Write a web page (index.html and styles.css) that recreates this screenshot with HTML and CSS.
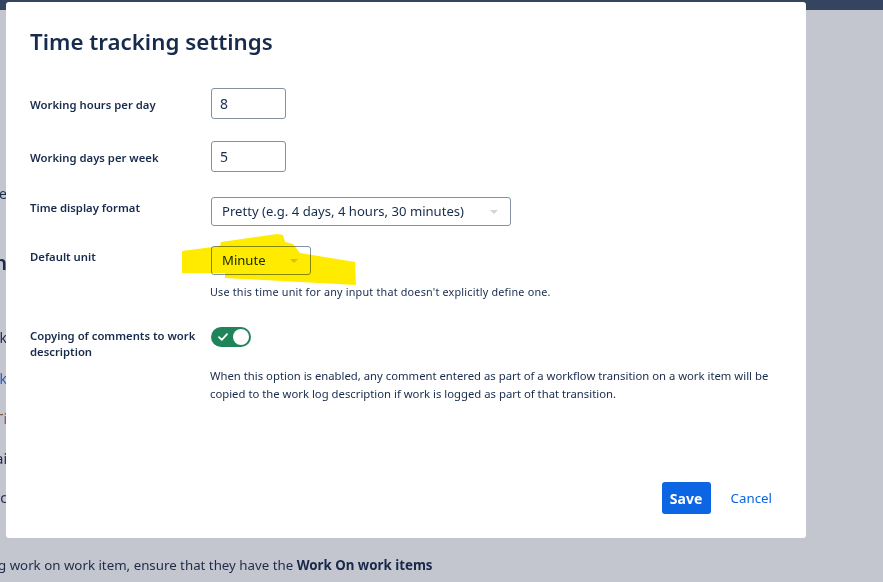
FILE: index.html
```html
<!DOCTYPE html>
<html lang="en">
<head>
<meta charset="utf-8">
<title>Time tracking settings</title>
<link rel="stylesheet" href="styles.css">
</head>
<body>
<div class="topbar"></div>
<main class="page">
  <div class="peek p1"><span>to how time tracking works on your site</span></div>
  <div class="peek p2 heading"><span>Configuration</span></div>
  <div class="peek p3"><span>Working hours per day and week</span></div>
  <div class="peek p4 link"><span>Log work</span></div>
  <div class="peek p5 warn"><span>Ti</span></div>
  <div class="peek p6"><span>Default unit for time entries remai</span></div>
  <div class="peek p7"><span>Copying of comments etc</span></div>
  <p class="bottom-line">g work on work item, ensure that they have the <b>Work On work items</b></p>
</main>

<section class="modal">
  <h1 class="title">Time tracking settings</h1>
  <div class="form">
    <div class="row row-center r1">
      <label class="label">Working hours per day</label>
      <div class="control"><div class="input small">8</div></div>
    </div>
    <div class="row row-center r2">
      <label class="label">Working days per week</label>
      <div class="control"><div class="input small">5</div></div>
    </div>
    <div class="row r3">
      <label class="label pad4">Time display format</label>
      <div class="control"><div class="select wide"><span>Pretty (e.g. 4 days, 4 hours, 30 minutes)</span><i class="caret"></i></div></div>
    </div>
    <div class="row r4">
      <label class="label pad4">Default unit</label>
      <div class="control">
        <div class="select unit"><span>Minute</span><i class="caret"></i></div>
        <p class="help help1">Use this time unit for any input that doesn't explicitly define one.</p>
      </div>
    </div>
    <div class="row r5">
      <label class="label pad1 wrap">Copying of comments to work description</label>
      <div class="control">
        <div class="toggle">
          <svg class="check" width="10" height="8" viewBox="0 0 10 8"><path d="M1 4.2 L3.8 6.8 L9 1.2" fill="none" stroke="#fff" stroke-width="1.8" stroke-linecap="round" stroke-linejoin="round"/></svg>
          <span class="knob"></span>
        </div>
        <p class="help help2">When this option is enabled, any comment entered as part of a workflow transition on a work item will be copied to the work log description if work is logged as part of that transition.</p>
      </div>
    </div>
  </div>
  <div class="footer">
    <button class="btn save">Save</button>
    <button class="btn cancel">Cancel</button>
  </div>
</section>

<svg class="highlight" width="883" height="582" viewBox="0 0 883 582">
  <polygon points="182,251 220,246 221,242 277,234 283,235 285,242 293,244 300,253 355,262 356,285 225,278 225,273 182,273" fill="#ffeb00"/>
</svg>
</body>
</html>
```

FILE: styles.css
```css
* { box-sizing: border-box; }
html, body { margin: 0; padding: 0; }
body {
  width: 883px;
  height: 582px;
  overflow: hidden;
  background: #c3c6cf;
  font-family: "Noto Sans", "Open Sans", sans-serif;
  color: #1d2b48;
  position: relative;
}
.topbar {
  height: 10px;
  background: #35455f;
}
.page {
  padding-top: 175px;
}
.peek {
  width: 7px;
  display: flex;
  justify-content: flex-end;
  white-space: nowrap;
  font-size: 14px;
  line-height: 18px;
}
.p2 { margin-top: 47px; }
.heading { font-size: 20px; line-height: 26px; font-weight: 600; }
.p3 { margin-top: 53px; }
.p4 { margin-top: 23px; }
.link { color: #2a5cb8; }
.p5 { margin-top: 22px; }
.warn { color: #8a5a44; }
.p6 { margin-top: 22px; }
.p7 { margin-top: 21px; }
.bottom-line {
  margin: 49px 0 0 -2px;
  font-size: 13.3px;
  line-height: 18px;
  white-space: nowrap;
  color: #1d2b48;
}
.bottom-line b { font-weight: 700; color: #172848; }

.modal {
  position: absolute;
  top: 2px;
  left: 6px;
  width: 800px;
  height: 536px;
  background: #fff;
  border-radius: 3px;
  display: flex;
  flex-direction: column;
  padding: 0 24px 24px 24px;
  color: #172b4d;
}
.title {
  margin: 26px 0 0 0;
  font-size: 22.3px;
  line-height: 28px;
  font-weight: 600;
  color: #172b4d;
}
.form { flex: 1; }
.row { display: flex; }
.row-center { align-items: center; }
.r1 { margin-top: 32px; }
.r2 { margin-top: 22px; }
.r3 { margin-top: 25px; }
.r4 { margin-top: 20px; }
.r5 { margin-top: 27px; }
.label {
  width: 181px;
  flex: none;
  font-size: 11.3px;
  line-height: 16px;
  font-weight: 600;
  color: #172b4d;
}
.row-center .label { padding-top: 3px; }
.pad4 { padding-top: 3px; }
.pad1 { padding-top: 1px; }
.wrap { padding-right: 8px; }
.control { flex: 1; }
.input {
  height: 31px;
  border: 1px solid #8590a2;
  border-radius: 3px;
  font-size: 14px;
  line-height: 29px;
  padding: 0 8px;
  color: #172b4d;
}
.small { width: 75px; }
.select {
  height: 29px;
  border: 1px solid #8590a2;
  border-radius: 3px;
  font-size: 13.1px;
  line-height: 27px;
  padding: 0 10px;
  display: flex;
  align-items: center;
  justify-content: space-between;
  color: #172b4d;
}
.wide { width: 300px; }
.unit { width: 100px; }
.caret {
  width: 0;
  height: 0;
  border-left: 4px solid transparent;
  border-right: 4px solid transparent;
  border-top: 4px solid #d0d4db;
  margin-right: 2px;
}
.help {
  margin: 0;
  color: #172b4d;
  font-size: 11.3px;
}
.help1 {
  font-size: 10.8px;
  letter-spacing: 0.2px;
  margin-top: 9px;
  line-height: 16px;
  margin-left: -1px;
}
.help2 {
  margin-top: 20px;
  line-height: 18px;
  width: 575px;
  margin-left: -1px;
}
.toggle {
  width: 40px;
  height: 20px;
  border-radius: 10px;
  background: #1f845a;
  display: flex;
  align-items: center;
  justify-content: space-between;
  padding: 0 2px 0 7px;
}
.check { display: block; }
.knob {
  width: 16px;
  height: 16px;
  border-radius: 50%;
  background: #fff;
}
.footer {
  display: flex;
  justify-content: flex-end;
  align-items: center;
  gap: 10px;
  margin-right: 0;
}
.btn {
  font-family: "Noto Sans", "Open Sans", sans-serif;
  font-size: 14px;
  height: 32px;
  border: none;
  border-radius: 3px;
  cursor: pointer;
}
.save {
  background: #0c66e4;
  color: #fff;
  font-weight: 700;
  width: 49px;
  padding: 0;
}
.cancel {
  background: transparent;
  color: #0c66e4;
  font-size: 13.3px;
  padding: 0 10px;
}
.highlight {
  position: absolute;
  top: 0;
  left: 0;
  mix-blend-mode: multiply;
  pointer-events: none;
}
```
